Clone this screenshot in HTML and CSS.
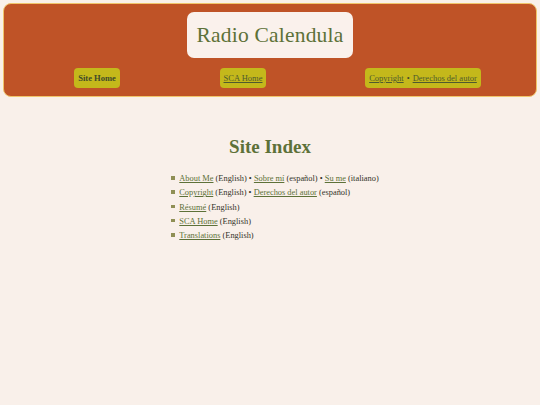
FILE: index.html
```html
<!DOCTYPE html>
<html lang="en">
<head>
<meta charset="utf-8">
<title>Site Index</title>
<link rel="stylesheet" href="styles.css">
</head>
<body>
<header class="masthead">
  <div class="title-box"><span class="title">Radio Calendula</span></div>
  <nav class="nav">
    <div class="nav-cell"><span class="pill"><strong>Site Home</strong></span></div>
    <div class="nav-cell"><span class="pill"><a href="#">SCA Home</a></span></div>
    <div class="nav-cell"><span class="pill"><a href="#">Copyright</a> • <a href="#">Derechos del autor</a></span></div>
  </nav>
</header>
<main class="content">
  <h1 class="heading">Site Index</h1>
  <ul class="index">
    <li><a href="#">About Me</a> (English) • <a href="#">Sobre mí</a> (español) • <a href="#">Su me</a> (italiano)</li>
    <li><a href="#">Copyright</a> (English) • <a href="#">Derechos del autor</a> (español)</li>
    <li><a href="#">Résumé</a> (English)</li>
    <li><a href="#">SCA Home</a> (English)</li>
    <li><a href="#">Translations</a> (English)</li>
  </ul>
</main>
</body>
</html>
```
FILE: styles.css
```css
html, body {
  margin: 0;
  padding: 0;
}
body {
  background: #f9f0ea;
  font-family: "Liberation Serif", "DejaVu Serif", serif;
  color: #333329;
  padding: 3px 3px;
}
.masthead {
  background: #bf5327;
  border: 1px solid #f0c56c;
  border-radius: 8px;
  padding: 8px 0 8px 0;
  display: flex;
  flex-direction: column;
  align-items: center;
}
.title-box {
  background: #faf1ec;
  border-radius: 7px;
  width: 166px;
  height: 46px;
  display: flex;
  align-items: center;
  justify-content: center;
}
.title {
  font-size: 21.5px;
  color: #5d7138;
  letter-spacing: 0.2px;
}
.nav {
  align-self: stretch;
  display: grid;
  grid-template-columns: 154px 138px 222px;
  padding-left: 16px;
  margin-top: 10px;
}
.nav-cell {
  display: flex;
  justify-content: center;
}
.pill {
  background: #c4b81b;
  border-radius: 4px;
  height: 20px;
  padding: 0 4px;
  display: flex;
  align-items: center;
  font-size: 8.5px;
  color: #444a2a;
  white-space: nowrap;
  gap: 3px;
}
.pill strong {
  color: #3f4a2a;
}
.pill a {
  color: #4f5a2e;
}
.content {
  padding-top: 39px;
}
.heading {
  text-align: center;
  font-size: 19px;
  color: #5d7138;
  margin: 0 0 14px 0;
}
.index {
  width: fit-content;
  margin: 0 auto;
  padding-left: 18px;
  font-size: 8.4px;
  list-style: none;
  color: #333329;
}
.index li {
  line-height: 14.25px;
}
.index li::before {
  content: "";
  display: inline-block;
  width: 3.5px;
  height: 3.5px;
  background: #8f8f55;
  margin-left: -8px;
  margin-right: 4.5px;
  vertical-align: 1.5px;
}
.index a {
  color: #5d7138;
}
```
